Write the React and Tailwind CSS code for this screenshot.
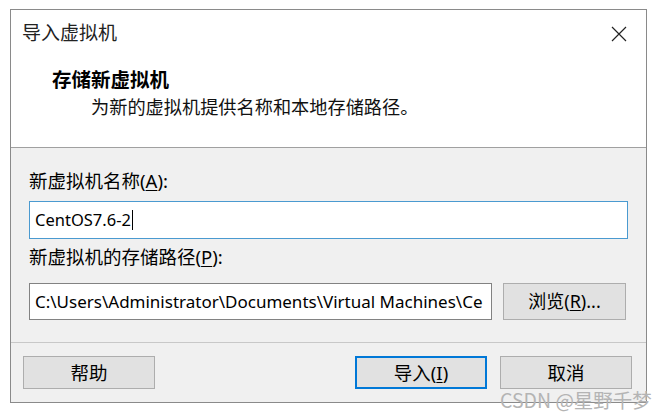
import React from "react";

const F = { fontFamily: '"Noto Sans", "Noto Sans CJK SC", sans-serif' };

export default function App() {
  return (
    <div className="relative w-[668px] h-[419px] bg-white overflow-hidden text-[#000]" style={F}>
      <div className="ml-[10px] mt-[9px] w-[637px] h-[394px] border border-[#8a8a8a] flex flex-col">
        <div className="h-[138px] bg-white border-b border-[#a0a0a0] flex flex-col">
          <div className="flex items-center justify-between h-[46px] pl-[11px] pr-[19px]">
            <span className="text-[19px] leading-[24px] text-[#222]">导入虚拟机</span>
            <svg width="16" height="16" viewBox="0 0 16 16" className="mt-[1px]">
              <path d="M1 1L15 15M15 1L1 15" stroke="#222" strokeWidth="1.2" fill="none" />
            </svg>
          </div>
          <div className="pl-[41px] mt-[12px] text-[19.5px] leading-[24px] font-bold">存储新虚拟机</div>
          <div className="pl-[80px] mt-[3px] text-[18.2px] leading-[24px] text-[#111]">为新的虚拟机提供名称和本地存储路径。</div>
        </div>
        <div className="flex-1 bg-[#f0f0f0] flex flex-col">
          <div className="px-[18px] pt-[21px]">
            <div className="text-[18.5px] leading-[24px] h-[24px]">
              新虚拟机名称(<span className="underline underline-offset-2">A</span>):
            </div>
            <div className="mt-[8px] h-[38px] bg-white border border-[#4a9ad0] flex items-center pl-[5px] text-[16.5px]">
              <span>CentOS7.6-2</span>
              <span className="inline-block w-[1px] h-[20px] bg-black ml-[1px]"></span>
            </div>
            <div className="mt-[6px] text-[18.5px] leading-[24px] h-[24px]">
              新虚拟机的存储路径(<span className="underline underline-offset-2">P</span>):
            </div>
            <div className="mt-[14px] flex items-center gap-[11px]">
              <div className="w-[463px] h-[37px] bg-white border border-[#828282] flex items-center pl-[5px] text-[17px] overflow-hidden whitespace-nowrap">
                C:\Users\Administrator\Documents\Virtual Machines\Ce
              </div>
              <div className="w-[123px] h-[37px] bg-[#e1e1e1] border border-[#adadad] flex items-center justify-center text-[18px]">
                浏览(<span className="underline underline-offset-2">R</span>)...
              </div>
            </div>
          </div>
          <div className="mt-[22px] border-t border-[#c8c8c8] flex-1 flex items-start pt-[13px] pl-[12px]">
            <div className="w-[132px] h-[33px] bg-[#e1e1e1] border border-[#adadad] flex items-center justify-center text-[18.5px]">帮助</div>
            <div className="ml-[200px] w-[132px] h-[33px] bg-[#e1e1e1] border-2 border-[#0078d7] flex items-center justify-center text-[18.5px]">
              导入(<span className="underline underline-offset-2">I</span>)
            </div>
            <div className="ml-[13px] w-[132px] h-[33px] bg-[#e1e1e1] border border-[#adadad] flex items-center justify-center text-[18.5px]">取消</div>
          </div>
        </div>
      </div>
      <div className="absolute left-[500px] top-[387px] text-[19.5px] leading-[26px] text-[#b4b4b4]" style={{ fontFamily: '"Noto Sans CJK SC", sans-serif' }}>
        CSDN @星野千梦
      </div>
    </div>
  );
}
